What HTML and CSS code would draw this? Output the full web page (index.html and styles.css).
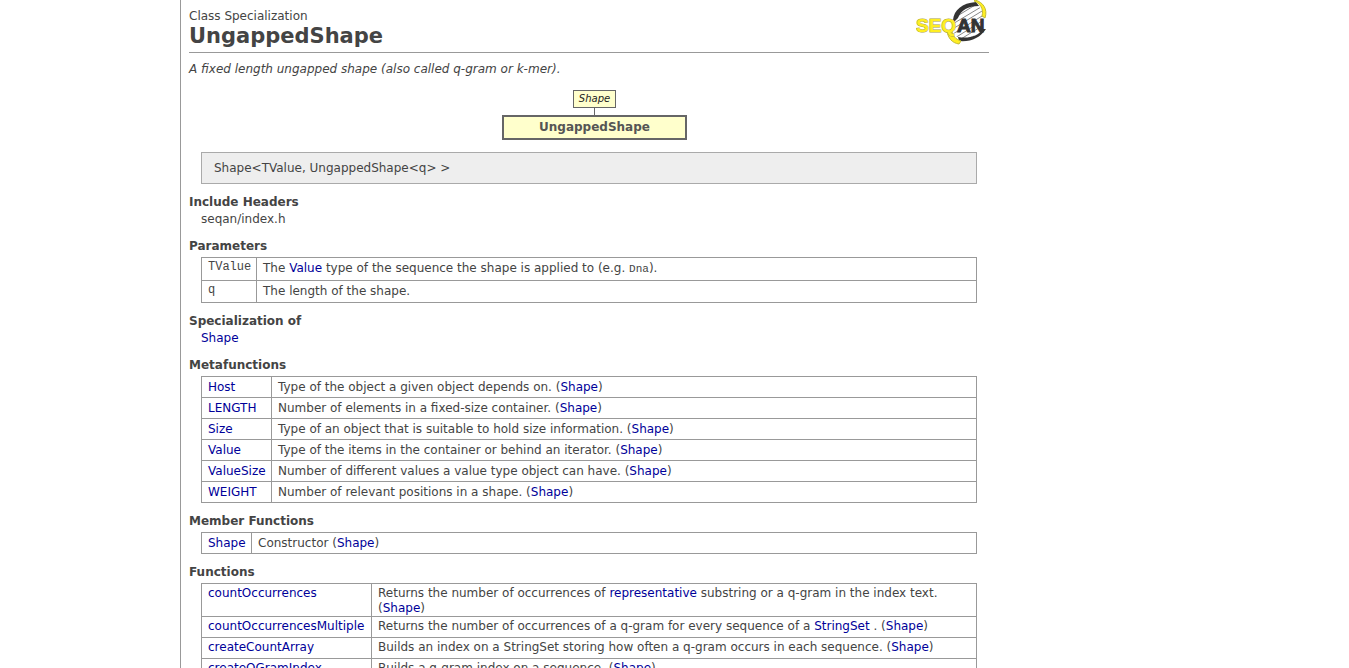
FILE: index.html
```html
<!DOCTYPE html>
<html lang="en">
<head>
<meta charset="utf-8">
<title>UngappedShape</title>
<link rel="stylesheet" href="styles.css">
</head>
<body>
<main class="page">
<article class="doc">
<header class="head">
<div>
<p class="kind">Class Specialization</p>
<h1 class="title">UngappedShape</h1>
</div>
<svg class="logo" viewBox="0 0 72 46" role="img" aria-label="SeqAn">
<defs><clipPath id="body"><path d="M37 31C33 17 46 5 61 4C76 19 62 40 43 40Z"/></clipPath></defs>
<g clip-path="url(#body)" stroke="#888" stroke-width="1"><path d="M30 18L56 2M30 23L64 2M30 28L70 4M30 33L71 8M32 37L71 13M34 41L71 18M40 42L71 23M46 43L71 28"/></g>
<path d="M37 20C38 10 46 3 60 2L63 6C52 6 45 10 42 18L38 22Z" fill="#333"/>
<path d="M42 37C53 39 62 36 67 29L70 29C64 38 55 42 43 41Z" fill="#333"/>
<path d="M58 1C64 3 68 9 66 16L69 18C72 9 67 2 59 0Z" fill="#ffee22" stroke="#c4bb33" stroke-width="1"/>
<path d="M31 31C32 38 36 43 43 44L45 41C39 39 37 36 36 31Z" fill="#ffee22" stroke="#c4bb33" stroke-width="1"/>
<text class="logo-seq" x="0" y="32">SEQ</text>
<text class="logo-an" x="41" y="32">AN</text>
</svg>
</header>
<p class="summary">A fixed length ungapped shape (also called q-gram or k-mer).</p>
<div class="tree">
<a class="parent" href="#shape">Shape</a>
<span class="stem"></span>
<strong class="current">UngappedShape</strong>
</div>
<div class="signature">Shape&lt;TValue, UngappedShape&lt;q&gt; &gt;</div>

<h2 class="section">Include Headers</h2>
<p class="entry">seqan/index.h</p>

<h2 class="section">Parameters</h2>
<table class="list params">
<colgroup><col class="col-param"><col></colgroup>
<tr><th scope="row"><code>TValue</code></th><td>The <a href="#value">Value</a> type of the sequence the shape is applied to (e.g. <code>Dna</code>).</td></tr>
<tr><th scope="row"><code>q</code></th><td>The length of the shape.</td></tr>
</table>

<h2 class="section">Specialization of</h2>
<p class="entry"><a href="#shape">Shape</a></p>

<h2 class="section">Metafunctions</h2>
<table class="list">
<colgroup><col class="col-meta"><col></colgroup>
<tr><th scope="row"><a href="#host">Host</a></th><td>Type of the object a given object depends on. (<a href="#shape">Shape</a>)</td></tr>
<tr><th scope="row"><a href="#length">LENGTH</a></th><td>Number of elements in a fixed-size container. (<a href="#shape">Shape</a>)</td></tr>
<tr><th scope="row"><a href="#size">Size</a></th><td>Type of an object that is suitable to hold size information. (<a href="#shape">Shape</a>)</td></tr>
<tr><th scope="row"><a href="#value">Value</a></th><td>Type of the items in the container or behind an iterator. (<a href="#shape">Shape</a>)</td></tr>
<tr><th scope="row"><a href="#valuesize">ValueSize</a></th><td>Number of different values a value type object can have. (<a href="#shape">Shape</a>)</td></tr>
<tr><th scope="row"><a href="#weight">WEIGHT</a></th><td>Number of relevant positions in a shape. (<a href="#shape">Shape</a>)</td></tr>
</table>

<h2 class="section">Member Functions</h2>
<table class="list">
<colgroup><col class="col-member"><col></colgroup>
<tr><th scope="row"><a href="#ctor">Shape</a></th><td>Constructor (<a href="#shape">Shape</a>)</td></tr>
</table>

<h2 class="section">Functions</h2>
<table class="list functions">
<colgroup><col class="col-func"><col></colgroup>
<tr><th scope="row"><a href="#co">countOccurrences</a></th><td>Returns the number of occurrences of <a href="#rep">representative</a> substring or a q-gram in the index text. (<a href="#shape">Shape</a>)</td></tr>
<tr><th scope="row"><a href="#com">countOccurrencesMultiple</a></th><td>Returns the number of occurrences of a q-gram for every sequence of a <a href="#stringset">StringSet</a> . (<a href="#shape">Shape</a>)</td></tr>
<tr><th scope="row"><a href="#cca">createCountArray</a></th><td>Builds an index on a StringSet storing how often a q-gram occurs in each sequence. (<a href="#shape">Shape</a>)</td></tr>
<tr><th scope="row"><a href="#cqi">createQGramIndex</a></th><td>Builds a q-gram index on a sequence. (<a href="#shape">Shape</a>)</td></tr>
</table>
</article>
</main>
</body>
</html>
```
FILE: styles.css
```css
* { box-sizing: border-box; }
body {
  margin: 0;
  background: #fff;
  color: #444;
  font: 12px/15px Verdana, "DejaVu Sans", sans-serif;
}
p, h1, h2 { margin: 0; }
a { color: #000099; text-decoration: none; }
code { font: 11px/15px "Courier New", "Liberation Mono", monospace; }

.page {
  height: 100vh;
  margin-left: 180px;
  padding: 0 8px;
  border-left: 1px solid #999;
  overflow: hidden;
}
.doc { max-width: 800px; }

.head {
  display: flex;
  justify-content: space-between;
  align-items: flex-start;
  padding: 9px 0 3px;
  border-bottom: 1px solid #999;
}
.title { font-size: 21px; line-height: 25px; }
.logo { width: 72px; height: 46px; margin: -9px 1px 0 0; }
.logo-seq, .logo-an { font: bold 19px "Liberation Sans", Arial, sans-serif; }
.logo-seq { fill: #ffee22; stroke: #aaa344; stroke-width: 1px; paint-order: stroke; }
.logo-an { fill: #333; stroke: #333; stroke-width: 1px; }

.summary { padding: 9px 0 13px; font-style: italic; }

.tree {
  display: flex;
  flex-direction: column;
  align-items: center;
  margin-left: 11px;
}
.parent {
  padding: 2px 5px;
  border: 1px solid #666;
  background: #ffffcc;
  color: #222;
  font-size: 10px;
  line-height: 12px;
  font-style: italic;
}
.stem { width: 1px; height: 7px; background: #666; }
.current {
  width: 185px;
  padding: 3px 0;
  border: 2px solid #666;
  background: #ffffcc;
  color: #555;
  text-align: center;
}

.signature {
  margin: 12px 12px 0;
  padding: 8px 12px 7px;
  border: 1px solid #aaa;
  background: #eee;
}

.section { margin-top: 10px; font-size: 12px; line-height: 17px; }
.entry { padding-left: 12px; line-height: 17px; }

.list {
  width: calc(100% - 24px);
  margin: 2px 12px 0;
  border-collapse: collapse;
  table-layout: fixed;
}
.list th, .list td {
  height: 21px;
  padding: 3px 6px 0;
  border: 1px solid #999;
  font-weight: normal;
  text-align: left;
  vertical-align: top;
}
.params th, .params td { height: 23px; }
.params tr:last-child > * { height: 22px; }
.params th { padding-top: 1px; }
.params th code { font-size: 12px; }
.functions th, .functions td { padding-top: 2px; }
.col-param { width: 55px; }
.col-meta { width: 70px; }
.col-member { width: 50px; }
.col-func { width: 170px; }
```
